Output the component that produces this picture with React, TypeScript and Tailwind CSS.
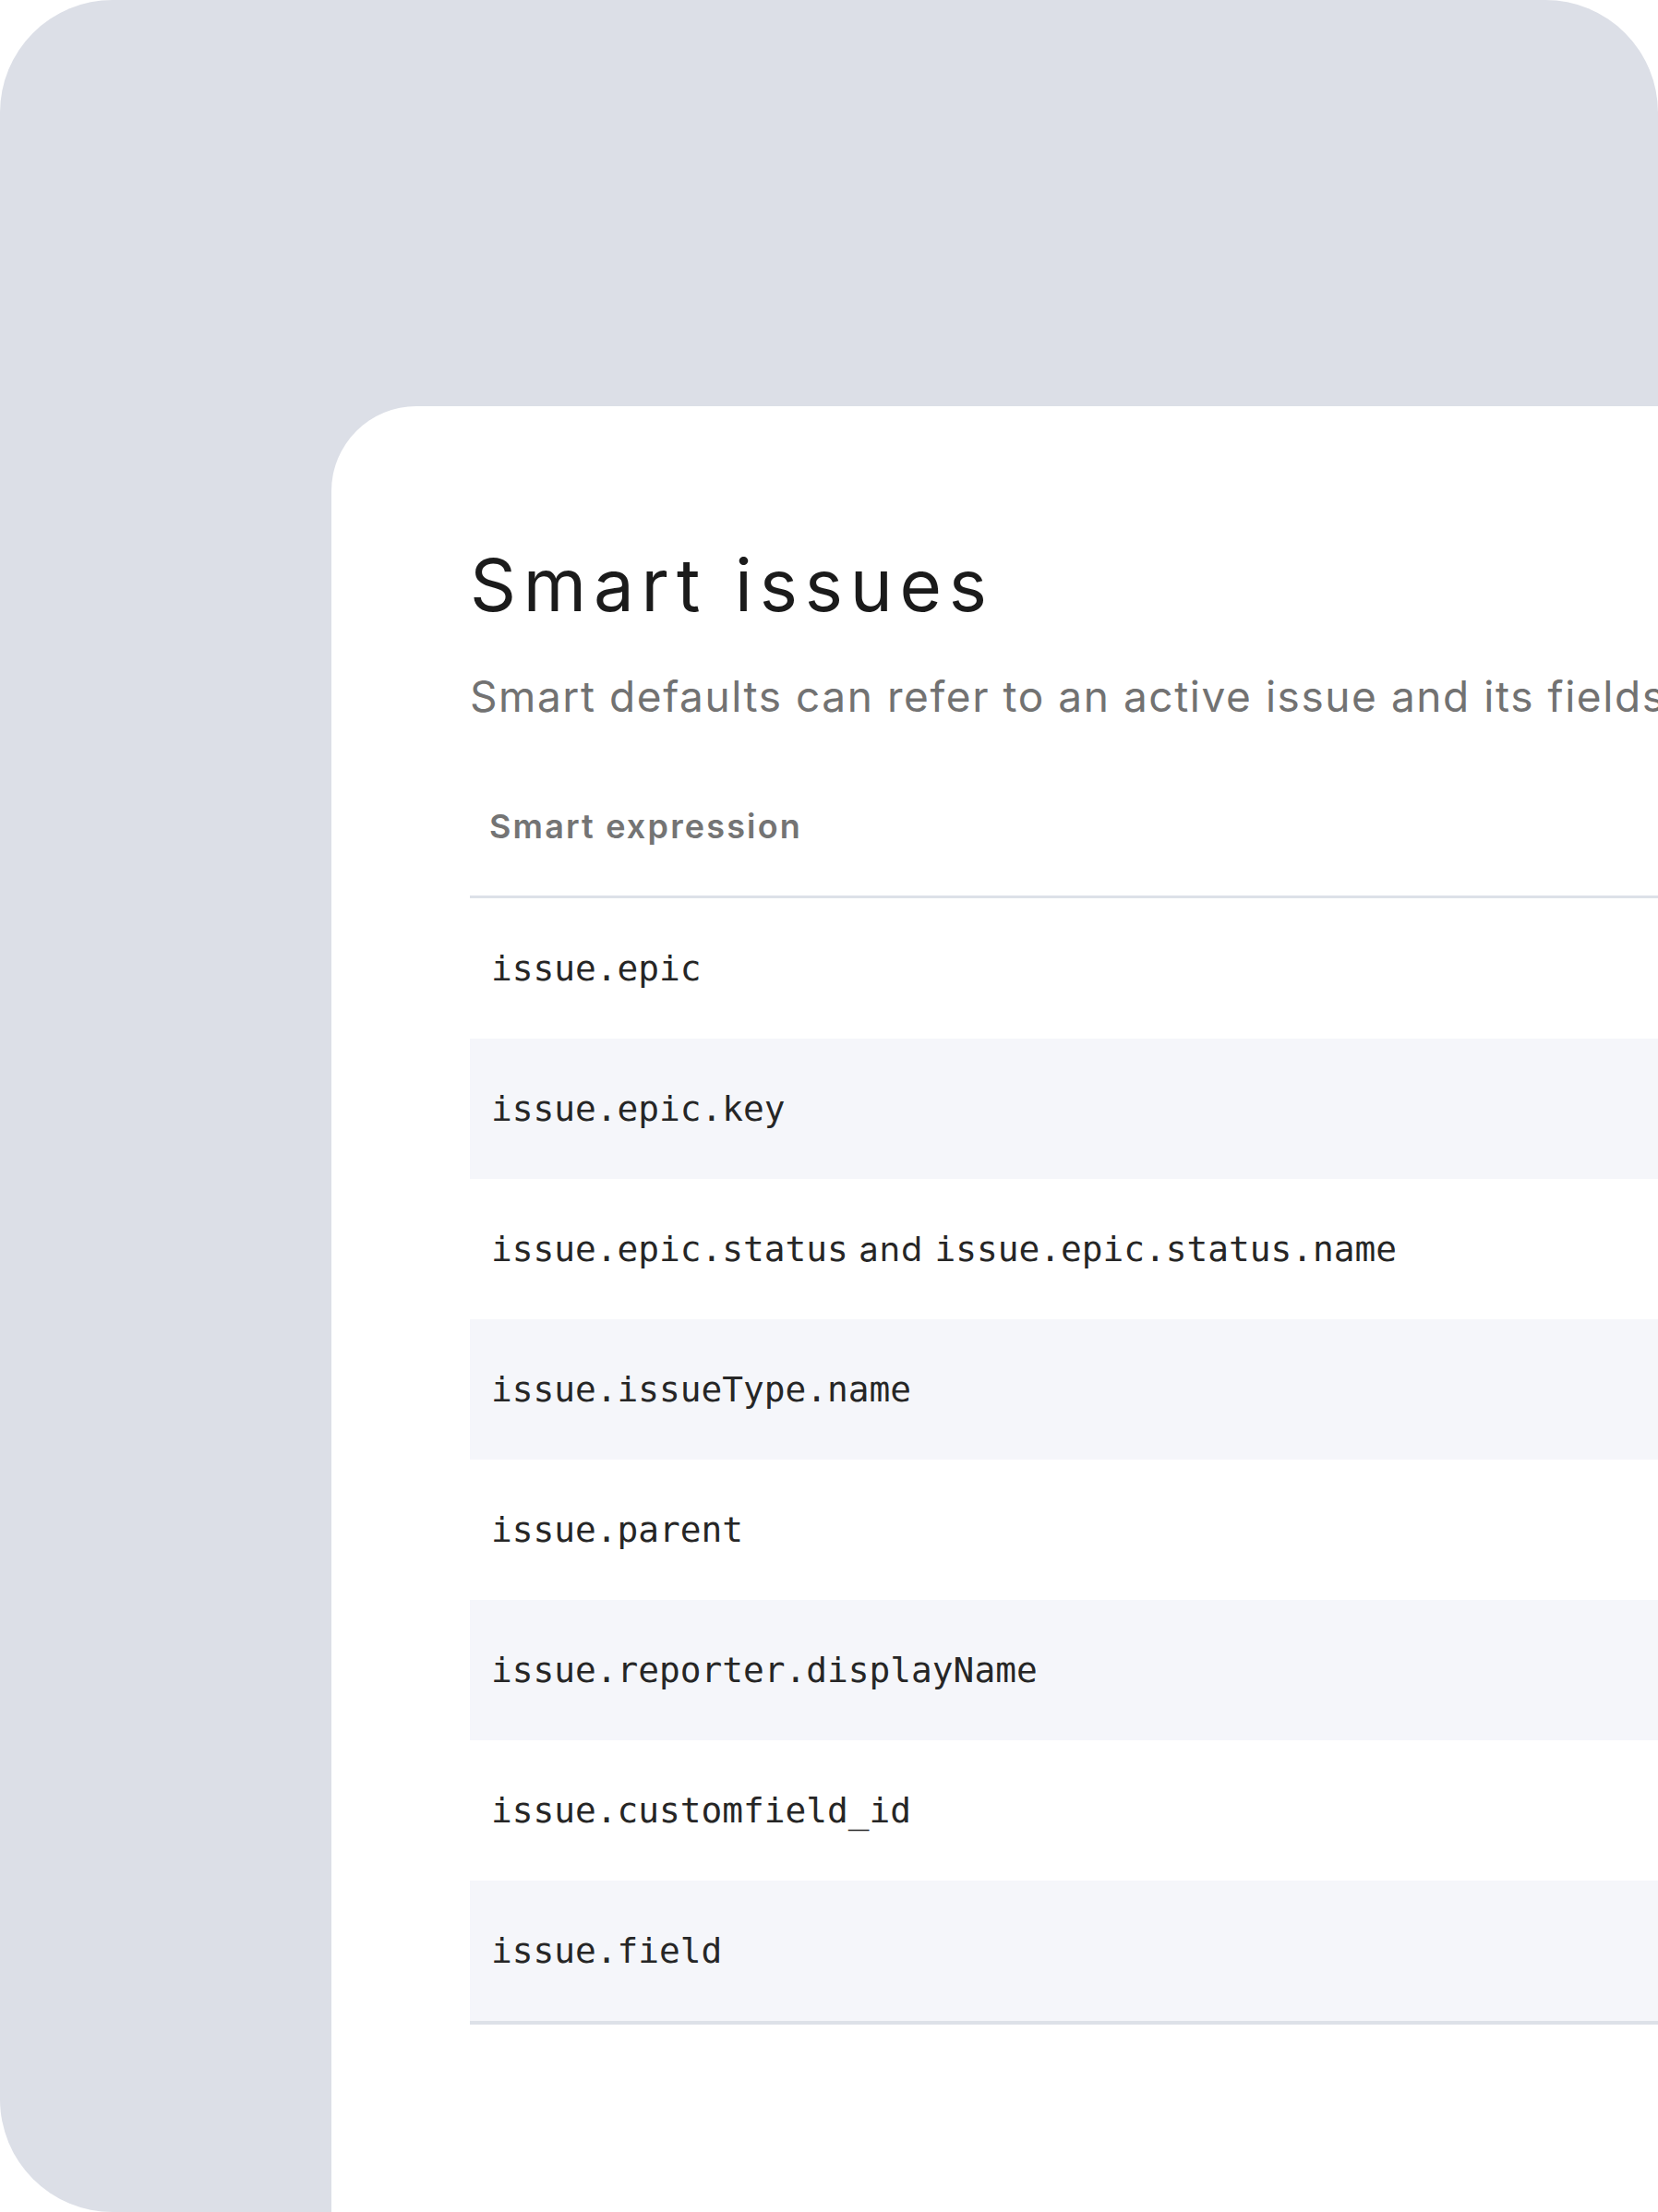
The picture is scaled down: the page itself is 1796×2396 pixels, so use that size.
import React from 'react'

type Row = { parts: { text: string; code: boolean }[] }

const rows: Row[] = [
  { parts: [{ text: 'issue.epic', code: true }] },
  { parts: [{ text: 'issue.epic.key', code: true }] },
  {
    parts: [
      { text: 'issue.epic.status', code: true },
      { text: ' and ', code: false },
      { text: 'issue.epic.status.name', code: true },
    ],
  },
  { parts: [{ text: 'issue.issueType.name', code: true }] },
  { parts: [{ text: 'issue.parent', code: true }] },
  { parts: [{ text: 'issue.reporter.displayName', code: true }] },
  { parts: [{ text: 'issue.customfield_id', code: true }] },
  { parts: [{ text: 'issue.field', code: true }] },
]

const sans = "font-['Inter','Noto_Sans',sans-serif]"
const mono = "font-['DejaVu_Sans_Mono','Liberation_Mono',monospace]"

export default function App() {
  return (
    <div className="h-[2396px] w-[1796px] overflow-hidden bg-white">
      <div className="flex h-full w-full overflow-hidden rounded-tl-[122px] rounded-tr-[122px] rounded-bl-[122px] bg-[#dcdfe7] pl-[359px] pt-[440px]">
        <div className="flex-1 overflow-hidden rounded-tl-[92px] bg-white pl-[150px] pt-[155px]">
          <h1 className={`${sans} whitespace-nowrap text-[78px] leading-[78px] font-normal tracking-[0.1em] text-[#1b1b1b]`}>
            Smart issues
          </h1>
          <p className={`${sans} mt-[56px] whitespace-nowrap text-[46px] leading-[50px] tracking-[0.034em] text-[#727272]`}>
            Smart defaults can refer to an active issue and its fields
          </p>

          <div className="mt-[75px]">
            <div className="flex h-[119px] items-center border-b-[3px] border-[#dde1e8] pb-[34px] pl-[21px]">
              <span className={`${sans} whitespace-nowrap text-[36px] font-semibold tracking-[0.06em] text-[#747474]`}>
                Smart expression
              </span>
            </div>
            {rows.map((row, i) => (
              <div
                key={i}
                className={`flex h-[152px] items-center pl-[23px] ${i % 2 === 1 ? 'bg-[#f5f6fa]' : 'bg-white'}`}
              >
                <span className="whitespace-pre text-[#262626]">
                  {row.parts.map((p, j) =>
                    p.code ? (
                      <span key={j} className={`${mono} text-[37.8px]`}>
                        {p.text}
                      </span>
                    ) : (
                      <span key={j} className={`${sans} text-[37px] tracking-[0.04em]`}>
                        {p.text}
                      </span>
                    ),
                  )}
                </span>
              </div>
            ))}
            <div className="h-[4px] bg-[#dde1e8]" />
          </div>
        </div>
      </div>
    </div>
  )
}
